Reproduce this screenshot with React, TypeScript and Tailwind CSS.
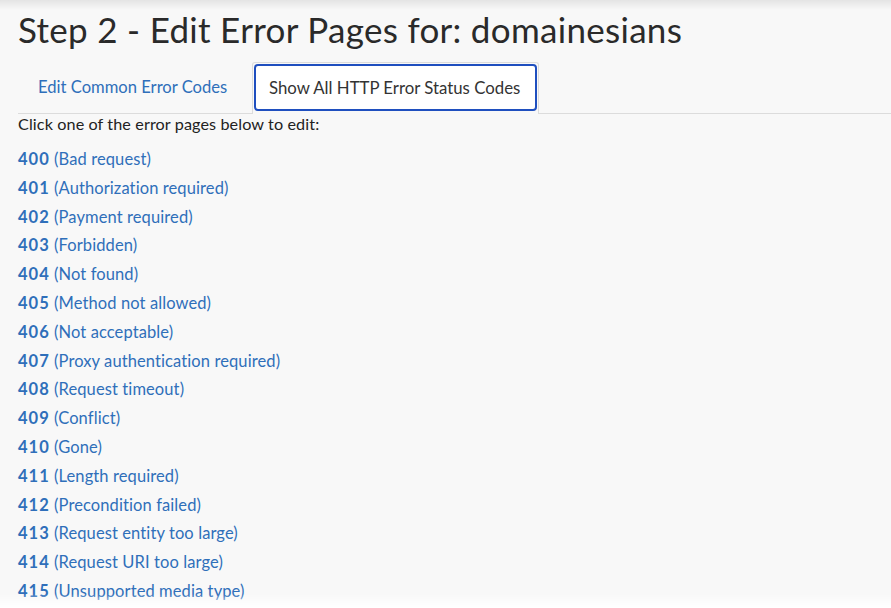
const codes: [string, string][] = [
  ["400", "Bad request"],
  ["401", "Authorization required"],
  ["402", "Payment required"],
  ["403", "Forbidden"],
  ["404", "Not found"],
  ["405", "Method not allowed"],
  ["406", "Not acceptable"],
  ["407", "Proxy authentication required"],
  ["408", "Request timeout"],
  ["409", "Conflict"],
  ["410", "Gone"],
  ["411", "Length required"],
  ["412", "Precondition failed"],
  ["413", "Request entity too large"],
  ["414", "Request URI too large"],
  ["415", "Unsupported media type"],
];

export default function App() {
  return (
    <div className="relative h-[608px] w-[891px] overflow-hidden bg-[#f8f8f8] font-['Lato',sans-serif] text-[#222]">
      <div className="pointer-events-none absolute inset-x-0 top-0 h-[10px] bg-gradient-to-b from-[#e4e4e4] to-transparent" />
      <div className="pointer-events-none absolute inset-x-0 bottom-0 h-[14px] bg-gradient-to-t from-white to-transparent" />

      <div className="pl-[18px]">
        <h1 className="pt-[8px] text-[35px] leading-[42px] tracking-[0.3px] text-[#2a2a2a]">
          Step 2 - Edit Error Pages for: domainesians
        </h1>

        <div className="mt-[12px] flex h-[52px] items-stretch border-b border-[#dcdcdc]">
          <a className="flex w-[234px] items-center pl-[20px] text-[16.6px] text-[#2f6fba]">
            Edit Common Error Codes
          </a>
          <div className="-mb-px flex w-[287px] rounded-t-[3px] border border-b-0 border-[#dcdcdc] bg-[#f8f8f8] p-px pb-[3px]">
            <div className="flex flex-1 items-center rounded-[4px] border-2 border-[#1f4fbf] bg-white pl-[13px] text-[16.8px] text-[#333]">
              Show All HTTP Error Status Codes
            </div>
          </div>
        </div>

        <p className="text-[16.2px] leading-[20px] tracking-[0.1px]">Click one of the error pages below to edit:</p>

        <ul className="mt-[11px]">
          {codes.map(([code, label]) => (
            <li key={code} className="text-[16.5px] leading-[28.8px] tracking-[0.1px] text-[#2f6fba]">
              <a>
                <span className="font-bold tracking-[1px]">{code}</span> ({label})
              </a>
            </li>
          ))}
        </ul>
      </div>
    </div>
  );
}
